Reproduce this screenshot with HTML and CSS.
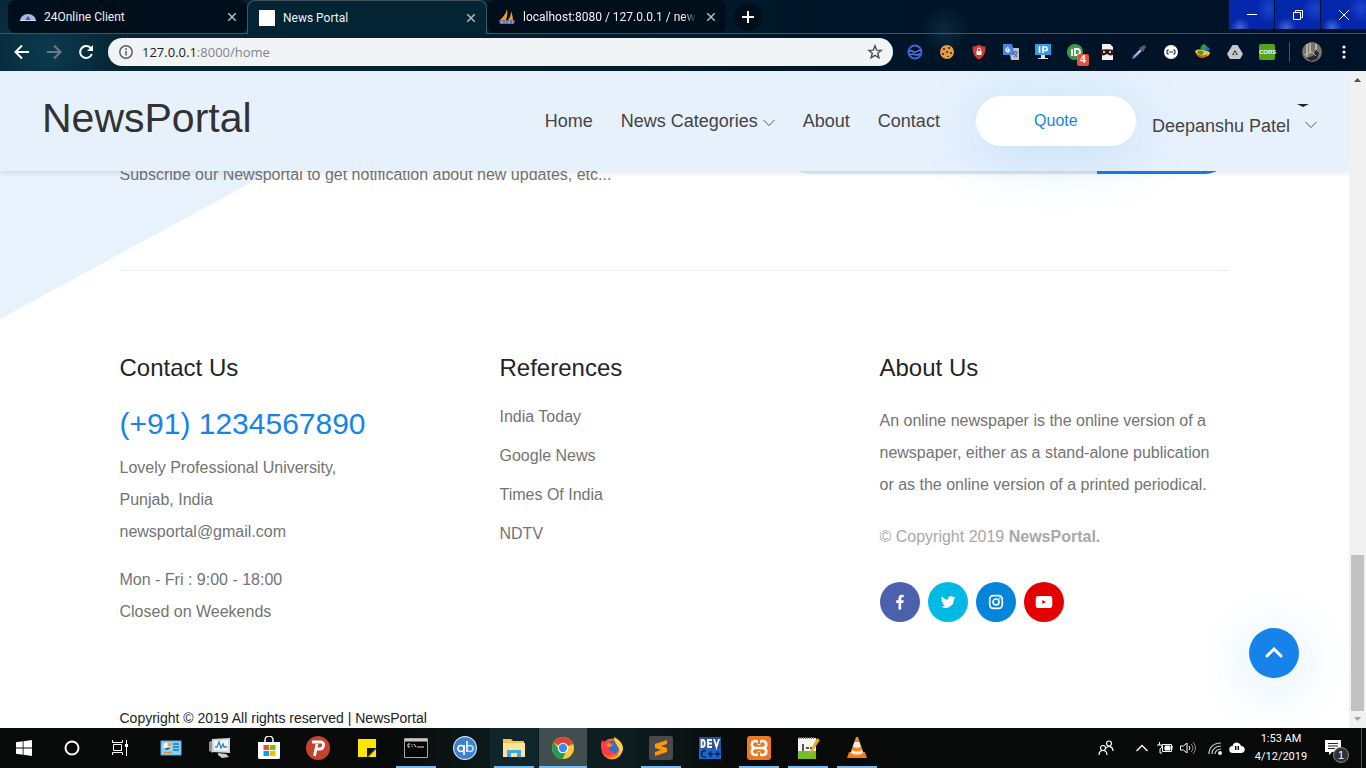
FILE: index.html
```html
<!DOCTYPE html>
<html lang="en">
<head>
<meta charset="utf-8">
<title>News Portal</title>
<link rel="stylesheet" href="styles.css">
</head>
<body>
<div class="desktop">
  <div class="tabstrip">
    <div class="tab">
      <svg class="favicon" width="16" height="16" viewBox="0 0 16 16"><path d="M0 12a8 7 0 0 1 16 0z" fill="#a9b8e8"/><path d="M5 11.500 8 7l3 4.500z" fill="#4a5488"/><path d="M0 11h16v1H0z" fill="#d6defa"/></svg>
      <span class="tab-title">24Online Client</span>
      <button class="tab-close" aria-label="Close tab"><svg width="8" height="8" viewBox="0 0 8 8"><path d="m0 0 8 8M8 0 0 8"/></svg></button>
    </div>
    <div class="tab tab-active">
      <svg class="favicon" width="16" height="16" viewBox="0 0 16 16"><path d="M0 0h16v16H0z" fill="#fff"/></svg>
      <span class="tab-title">News Portal</span>
      <button class="tab-close" aria-label="Close tab"><svg width="8" height="8" viewBox="0 0 8 8"><path d="m0 0 8 8M8 0 0 8"/></svg></button>
    </div>
    <div class="tab">
      <svg class="favicon" width="16" height="16" viewBox="0 0 16 16"><path d="M8 0c1 4 0 8-1 11H1C4 8 7 5 8 0zM12 2c1 3 2 6 2 9H9c2-3 3-5 3-9z" fill="#f39a24"/><path d="M0 11h16l-1 4H1z" fill="#6d6f9d"/><path d="M2 13h2M6 13h1M9 13h2M13 13h1" stroke="#e0e0f0"/></svg>
      <span class="tab-title tab-fade">localhost:8080 / 127.0.0.1 / newsp</span>
      <button class="tab-close" aria-label="Close tab"><svg width="8" height="8" viewBox="0 0 8 8"><path d="m0 0 8 8M8 0 0 8"/></svg></button>
    </div>
    <button class="new-tab" aria-label="New tab"><svg width="12" height="12" viewBox="0 0 12 12"><path d="M6 0v12M0 6h12" stroke="#fff" stroke-width="2"/></svg></button>
    <div class="captions">
      <button aria-label="Minimize"><svg width="10" height="10" viewBox="0 0 10 10"><path d="M0 4.500h10"/></svg></button>
      <button aria-label="Restore"><svg width="10" height="10" viewBox="0 0 10 10"><path d="M.5 2.500h7v7h-7zM2.500 2V.5h7v7H8"/></svg></button>
      <button aria-label="Close"><svg width="10" height="10" viewBox="0 0 10 10"><path d="m0 0 10 10M10 0 0 10"/></svg></button>
    </div>
  </div>

  <div class="toolbar">
    <div class="nav-buttons">
      <button aria-label="Back"><svg width="16" height="16" viewBox="0 0 16 16"><path d="M15 8H2M8 1.500 1.500 8 8 14.500" stroke="#fff" stroke-width="2" fill="none"/></svg></button>
      <button aria-label="Forward"><svg width="16" height="16" viewBox="0 0 16 16"><path d="M1 8h13M8 1.500 14.500 8 8 14.500" stroke="#6d7a86" stroke-width="2" fill="none"/></svg></button>
      <button aria-label="Reload"><svg width="16" height="16" viewBox="0 0 16 16"><path d="M13 4.500A6 6 0 1 0 13.800 10" stroke="#fff" stroke-width="2" fill="none"/><path d="M15 1v6H9z" fill="#fff"/></svg></button>
    </div>
    <div class="omnibox">
      <svg width="16" height="16" viewBox="0 0 16 16"><circle cx="8" cy="8" r="6.200" fill="none" stroke="#5f6368" stroke-width="1.500"/><path d="M8 7v4.500M8 4.300V6" stroke="#5f6368" stroke-width="1.600"/></svg>
      <span class="url"><b>127.0.0.1</b>:8000/home</span>
      <button aria-label="Bookmark this page"><svg width="16" height="16" viewBox="0 0 16 16"><path d="m8 1.800 1.700 4.300 4.500.3-3.500 2.900 1.200 4.500L8 11.300l-3.900 2.500 1.200-4.500-3.500-2.900 4.500-.3z" fill="none" stroke="#4b4f54" stroke-width="1.400"/></svg></button>
    </div>
    <div class="extensions">
      <svg viewBox="0 0 16 16"><circle cx="8" cy="8" r="6.500" fill="none" stroke="#3e66d8" stroke-width="2"/><path d="M2 8c3-4 4 2 7 0s3-2 5-1M3 11c4-3 5 2 10-1" fill="none" stroke="#547be8" stroke-width="1.500"/></svg>
      <svg viewBox="0 0 16 16"><circle cx="8" cy="8" r="7" fill="#e09b45"/><path d="M4 4h2v2H4zM9 3h2v2H9zM7 7h2v2H7zM3 9h2v2H3zM11 8h2v2h-2zM8 12h2v1H8z" fill="#6b3615"/></svg>
      <svg viewBox="0 0 16 16"><path d="M8 .5c2 1.500 4 2 6.500 2C14.500 9 13 13 8 15.500 3 13 1.500 9 1.500 2.500 4 2.500 6 2 8 .5z" fill="#d63a2f"/><path d="M5.500 7h5v4h-5z" fill="#fff"/><path d="M6.500 7V5.500a1.500 1.500 0 0 1 3 0V7" fill="none" stroke="#fff"/></svg>
      <svg viewBox="0 0 16 16"><path d="M6 4h10v12H8z" fill="#b9c4d2"/><path d="M0 0h9l3 11H0z" fill="#4a83e8"/><path d="M7 5.500H5V7h1.500A2 2 0 1 1 6 4.200" fill="none" stroke="#fff" stroke-width="1.100"/><path d="M10 8h5M12.500 7v1M11 13c2-1 3-3 3-5M11 9l3 4" stroke="#566070" fill="none"/></svg>
      <svg viewBox="0 0 16 16"><path d="M0 0h16v11H0z" fill="#2f9bea"/><path d="M6 11h4v3h3v1H3v-1h3z" fill="#dce5ea"/><path d="M4.500 2v7M8 9V3h2.500a1.500 1.500 0 0 1 0 3.500H8" stroke="#fff" stroke-width="1.700" fill="none"/></svg>
      <span class="ext-badged"><svg viewBox="0 0 16 16"><circle cx="8" cy="8" r="8" fill="#3d9b4c"/><path d="M5 5v7M8 12V5h2a3 3 0 0 1 0 6H8" stroke="#fff" stroke-width="1.800" fill="none"/></svg><span class="ext-badge">4</span></span>
      <svg viewBox="0 0 16 16"><path d="M3 0h8l3 3v13H3z" fill="#f2f2f2"/><path d="M1 6c5-1 9-1 14 0l-1 5c-3 1-4 0-6-1-2 1-3 2-6 1z" fill="#33191a"/><path d="M4 8h2M10 8h2" stroke="#fff" stroke-width="1.500"/></svg>
      <svg viewBox="0 0 16 16"><path d="m1 15 1-3 7-7 2 2-7 7z" fill="#5b7fd0"/><path d="m2 14 7-8 1 1z" fill="#eef"/><path d="m8 4 4 4 1-2 2-3-2-2-3 2z" fill="#5a5d66"/></svg>
      <svg viewBox="0 0 16 16"><circle cx="8" cy="8" r="7" fill="#fff"/><path d="M5.500 5.500 4 7v2l1.500 1.500M10.500 5.500 12 7v2l-1.500 1.500M6 8h4" fill="none" stroke="#30343b" stroke-width="1.200"/></svg>
      <svg viewBox="0 0 16 16"><path d="M5 4 9 0l6 5-5 6z" fill="#1b6fc4"/><path d="m6 2 3-2 3 3-4 4z" fill="#2e9e39"/><path d="M0 7c4-3 8-1 11 0l4 1-1 3c-5 4-12 3-14-4z" fill="#f3cf35"/><path d="M1 9c3 3 7 3 12 1-3 6-10 5-12-1z" fill="#d8511f"/><path d="M2 8c2-2 5-1 7 0l-2 3C5 11 3 10 2 8z" fill="#2e9e39"/></svg>
      <svg viewBox="0 0 16 16"><path d="M5.500 1h5L16 10l-3 5H3l-3-5z" fill="#c6c8ca"/><path d="m8 6 3 5H5z" fill="#29313b"/><path d="m8 8 1.500 2.500h-3z" fill="#fff"/></svg>
      <span class="ext-cors">CORS</span>
    </div>
    <div class="toolbar-end">
      <svg class="avatar" width="20" height="20" viewBox="0 0 20 20"><circle cx="10" cy="10" r="10" fill="#77736b"/><path d="M5 2v13M8 1v10M14 2v6" stroke="#c9c5b8" stroke-width="1.500"/><path d="m4 16 7-2 3-6 3 3-2 6-6 2z" fill="#26282c"/><path d="m2 13 8-3 4 4" stroke="#b7c0c8" fill="none"/></svg>
      <button aria-label="Menu"><svg width="4" height="14" viewBox="0 0 4 14" fill="#fff"><circle cx="2" cy="2" r="1.600"/><circle cx="2" cy="7" r="1.600"/><circle cx="2" cy="12" r="1.600"/></svg></button>
    </div>
  </div>

  <div class="viewport">
    <div class="page">
      <header class="site-header">
        <a class="brand" href="#">NewsPortal</a>
        <nav class="site-nav">
          <a href="#">Home</a>
          <a href="#">News Categories <svg width="12" height="8" viewBox="0 0 12 8"><path d="m.5 1 5.500 5.500L11.500 1"/></svg></a>
          <a href="#">About</a>
          <a href="#">Contact</a>
        </nav>
        <button class="quote">Quote</button>
        <a class="user" href="#">Deepanshu Patel <svg width="12" height="8" viewBox="0 0 12 8"><path d="m.5 1 5.500 5.500L11.500 1"/></svg><span class="user-caret"></span></a>
      </header>
      <main class="footer-area">
        <div class="wedge"></div>
        <div class="container newsletter">
          <p>Subscribe our Newsportal to get notification about new updates, etc...</p>
          <form class="subscribe"><input type="email" aria-label="Email address"><button type="button" aria-label="Subscribe"></button></form>
        </div>
        <div class="container columns">
          <section>
            <h2>Contact Us</h2>
            <a class="phone" href="#">(+91) 1234567890</a>
            <p>Lovely Professional University,<br>Punjab, India<br>newsportal@gmail.com</p>
            <p class="hours">Mon - Fri : 9:00 - 18:00<br>Closed on Weekends</p>
          </section>
          <section>
            <h2>References</h2>
            <ul class="links">
              <li><a href="#">India Today</a></li>
              <li><a href="#">Google News</a></li>
              <li><a href="#">Times Of India</a></li>
              <li><a href="#">NDTV</a></li>
            </ul>
          </section>
          <section>
            <h2>About Us</h2>
            <p>An online newspaper is the online version of a<br>newspaper, either as a stand-alone publication<br>or as the online version of a printed periodical.</p>
            <p class="copyright">© Copyright 2019 <b>NewsPortal.</b></p>
            <div class="social">
              <a class="facebook" href="#" aria-label="Facebook"><svg viewBox="0 0 16 16"><path d="M6.500 15.500V9H4.200V6.300h2.300V4.200C6.500 1.900 7.800.8 9.800.8l1.900.1v2.400h-1.300c-1 0-1.200.5-1.200 1.200v1.800h2.500L11.300 9H9.200v6.500z"/></svg></a>
              <a class="twitter" href="#" aria-label="Twitter"><svg viewBox="0 0 16 16"><path d="M15.500 3.500c-.6.300-1.100.4-1.700.5.600-.4 1.100-1 1.300-1.600-.6.300-1.200.6-1.900.7a3 3 0 0 0-5.200 2.700A8.500 8.500 0 0 1 1.800 2.600a3 3 0 0 0 1 4c-.5 0-1-.1-1.400-.4 0 1.500 1 2.700 2.400 3-.4.100-.9.100-1.300 0 .4 1.200 1.500 2.100 2.800 2.100A6 6 0 0 1 .8 12.600a8.600 8.600 0 0 0 13.200-7.600c.6-.4 1.100-.9 1.500-1.500z"/></svg></a>
              <a class="instagram" href="#" aria-label="Instagram"><svg viewBox="0 0 16 16"><rect x="1.700" y="1.700" width="12.600" height="12.600" rx="3.500" fill="none" stroke="#fff" stroke-width="1.700"/><circle cx="8" cy="8" r="3" fill="none" stroke="#fff" stroke-width="1.700"/><circle cx="11.700" cy="4.300" r=".9"/></svg></a>
              <a class="youtube" href="#" aria-label="YouTube"><svg class="wide" viewBox="0 0 18 16"><path fill-rule="evenodd" d="M3 2h12c1.500.3 2.300 1 2.300 3v6c0 2-1 3-2.300 3H3C1.500 13.700.7 13 .7 11V5C.7 3 1.600 2.200 3 2zm4.300 4v4L11 8z"/></svg></a>
            </div>
          </section>
        </div>
        <p class="container legal">Copyright © 2019 All rights reserved | NewsPortal</p>
      </main>
      <button class="to-top" aria-label="Back to top"><svg width="18" height="12" viewBox="0 0 18 12"><path d="m2 9 7-7 7 7" fill="none" stroke="#fff" stroke-width="3" stroke-linecap="round"/></svg></button>
    </div>
    <div class="scrollbar">
      <svg width="7" height="4" viewBox="0 0 7 4"><path d="M0 4 3.500 0 7 4z" fill="#505050"/></svg>
      <div class="track"><div class="thumb"></div></div>
      <svg width="7" height="4" viewBox="0 0 7 4"><path d="M0 0h7L3.500 4z" fill="#a3a3a3"/></svg>
    </div>
  </div>

  <div class="taskbar">
    <div class="system">
      <button aria-label="Start"><svg width="16" height="16" viewBox="0 0 16 16" fill="#fff"><path d="m0 2.300 6.700-1v6.300H0zM7.500 1.200 16 0v7.600H7.500zM0 8.400h6.700v6.300l-6.700-1zM7.500 8.400H16V16l-8.500-1.200z"/></svg></button>
      <button aria-label="Search"><svg width="16" height="16" viewBox="0 0 16 16"><circle cx="8" cy="8" r="6.500" fill="none" stroke="#fff" stroke-width="2"/></svg></button>
      <button aria-label="Task view"><svg width="16" height="16" viewBox="0 0 16 16" fill="none" stroke="#fff"><path d="M.5 0v2.500h10V0M1.500 4.500h8v6h-8zM.5 15v-2.500h10V15M14.500 0v16"/><path d="M13 4h3v3h-3z" fill="#fff" stroke="none"/></svg></button>
    </div>
    <div class="apps">
      <button aria-label="Control Panel"><svg viewBox="0 0 24 24"><path d="M1.500 4.500h21v15h-21z" fill="#4ab0ee"/><path d="M2.500 5.500h19v13h-19z" fill="#8fd0f8"/><circle cx="8.500" cy="10.500" r="4" fill="#fff"/><path d="M8.500 10.500v-4a4 4 0 0 1 4 4z" fill="#f5a52a"/><path d="M8.500 11.500h3.500a4 4 0 0 1-7 1z" fill="#1871c9"/><path d="M14 8h6M14 11h6M14 14h6" stroke="#1871c9" stroke-width="1.500"/><path d="M5 16.500h8" stroke="#f08519" stroke-width="1.500"/></svg></button>
      <button aria-label="Resource Monitor"><svg viewBox="0 0 24 24"><path d="m1 6 4-2v13l-4-2z" fill="#8d9399"/><path d="m4 3 18-1v15L4 16z" fill="#d4d9dc"/><path d="m6 5 14-1v11L6 14z" fill="#eef8fd"/><path d="M7 11h2l2-5 2 6 2-4 1 3h3" fill="none" stroke="#3685c0" stroke-width="1.300"/><path d="m10 17 8 1 3 3-7 1-4-3z" fill="#c9ced0"/></svg></button>
      <button aria-label="Store"><svg viewBox="0 0 24 24"><path d="M1 6h22v16l-1 1H2l-1-1z" fill="#fff"/><path d="M8 6V4a4 4 0 0 1 8 0v2" fill="none" stroke="#fff" stroke-width="1.500"/><path d="M6.500 9H12v5H6.500z" fill="#f25022"/><path d="M13 9h5.500v5H13z" fill="#7fba00"/><path d="M6.500 15H12v5H6.500z" fill="#00a4ef"/><path d="M13 15h5.500v5H13z" fill="#ffb900"/></svg></button>
      <button aria-label="Psiphon"><svg viewBox="0 0 24 24"><circle cx="12" cy="12" r="12" fill="#c4432a"/><path d="M6 6h9c4 0 3 7-1 7h-4M11 8 8.500 20" fill="none" stroke="#fff" stroke-width="2.800"/></svg></button>
      <button aria-label="Sticky Notes"><svg viewBox="0 0 24 24"><path d="M3 3h18v9l-9 9H3z" fill="#ffe600"/><path d="M12 21v-9h9z" fill="#111"/><path d="M13 21h8v-8z" fill="#ffe600"/></svg></button>
      <button class="running" aria-label="Command Prompt"><svg viewBox="0 0 24 24"><path d="M.5 2.500h23v19H.5z" fill="#050505" stroke="#a6a6a6"/><path d="M1 3h22v2.500H1z" fill="#c9c9c9"/><path d="M6 8H4v3h2M8 8v1M8 10v1M10 8l2 3M13 11h7" fill="none" stroke="#ddd"/></svg></button>
      <button aria-label="qBittorrent"><svg viewBox="0 0 24 24"><circle cx="12" cy="12" r="11.400" fill="#3e7fce" stroke="#c8def6" stroke-width="1.200"/><circle cx="8" cy="12.500" r="3" fill="none" stroke="#fff" stroke-width="1.600"/><path d="M11 9v10M14 5v11" stroke="#fff" stroke-width="1.600"/><circle cx="17" cy="12.500" r="3" fill="none" stroke="#cfe3fa" stroke-width="1.600"/></svg></button>
      <button class="running tinted" aria-label="File Explorer"><svg viewBox="0 0 24 24"><path d="M1 3h8l2 2h11v16H1z" fill="#f2c748"/><path d="M1 7h22v14H1z" fill="#ffe599"/><path d="M5 21v-7h14v7h-4v-4H9v4z" fill="#3ba9e4"/></svg></button>
      <button class="running current" aria-label="Google Chrome"><svg viewBox="0 0 24 24"><circle cx="12" cy="12" r="11" fill="#f9ca33"/><path d="M12 12 2.500 6.500a11 11 0 0 1 19 0L22 8z" fill="#df4333"/><path d="M2.500 6.500a11 11 0 0 0 9 16.500l4.500-9L8 13z" fill="#239c56"/><circle cx="12" cy="12" r="5.300" fill="#fff"/><circle cx="12" cy="12" r="4.200" fill="#4688f1"/></svg></button>
      <button aria-label="Firefox"><svg viewBox="0 0 24 24"><circle cx="12" cy="13" r="10.500" fill="#ff6a1f"/><circle cx="12" cy="11.500" r="7" fill="#2f6fd0"/><path d="M14 1c7 3 11 10 8 15-3 6-9 8-14 6 7 1 12-3 11-9-1-4-5-6-5-12z" fill="#ffd53a"/><path d="M2 4c1 1 2 2 3 2 2-2 4-2 4-1l1 2 4 1-4 3c-3 2 0 6 5 4-2 4-6 6-10 4C1 16 0 9 2 4z" fill="#ff3b47"/><path d="m6 9 3-3 1 2 3 1-3 2H8z" fill="#ff8a22"/></svg></button>
      <button class="running" aria-label="Sublime Text"><svg viewBox="0 0 24 24"><rect width="24" height="24" rx="2" fill="#4a4a4a"/><path d="m6 8 12-4v4l-6 2 6 2v4L6 20v-4l6-2-6-2z" fill="#ff9800"/></svg></button>
      <button aria-label="Dev-C++"><svg viewBox="0 0 24 24"><path d="M1 1h22v22H1z" fill="#2a4f9e"/><path d="M1 13h22v10H1z" fill="#1769cf"/><path d="M3.500 4v7h1c3 0 3-7 0-7zM14 4h-4v7h4M10 7.500h4M16 3l2.500 8L21 3" fill="none" stroke="#fff" stroke-width="1.800"/><path d="M8 15c-5-2-7 7 0 6M10 18h5M12.500 15v6M16.500 18h6M19.500 15v6" fill="none" stroke="#0b2a60" stroke-width="1.800"/></svg></button>
      <button class="running" aria-label="XAMPP"><svg viewBox="0 0 24 24"><rect width="24" height="24" rx="3" fill="#ef7622"/><path d="M12 9V7.500C12 6 10.500 5 8.500 5 3.500 5 3.500 12 8.500 12h7c5 0 5-7 0-7-2 0-3.500 1-3.500 2.500zM12 15v1.500c0 1.500-1.500 2.500-3.500 2.500-5 0-5-7 0-7h7c5 0 5 7 0 7-2 0-3.500-1-3.500-2.500z" fill="none" stroke="#fff" stroke-width="2.600"/><path d="M11 3h2v5h-2zM11 16h2v5h-2z" fill="#ef7622"/></svg></button>
      <button class="running" aria-label="Notepad++"><svg viewBox="0 0 24 24"><path d="M2 2h18v21H2z" fill="#f4f7ed"/><path d="M2 15h18v8H2z" fill="#75bd2c"/><path d="M3 2h16" stroke="#777" stroke-width="2" stroke-dasharray="1 1"/><path d="M7 8v7M10 12h3M14 12h2" stroke="#222" stroke-width="1.500"/><path d="m14 15 7-13 3 2-8 12-3 3z" fill="#efa325"/></svg></button>
      <button class="running" aria-label="VLC"><svg viewBox="0 0 24 24"><path d="m2 22 2-6h16l2 6z" fill="#f07b12"/><path d="M11 1h2l6 17c-4 3-10 3-14 0z" fill="#f58a1c"/><path d="m9.500 6-1.700 5c3 1 5 1 8 0l-1.600-5zM7 14l-1 3c4 2 8 2 12 0l-1-3c-3 2-7 2-10 0z" fill="#eee"/></svg></button>
    </div>
    <div class="tray">
      <svg width="16" height="16" viewBox="0 0 16 16" fill="none" stroke="#fff" stroke-width="1.200"><circle cx="11" cy="3.500" r="2.500"/><circle cx="5" cy="8" r="2.500"/><path d="M1 15c0-6 8-6 8 0M8 8c3-3 7-1 7 3"/></svg>
      <svg class="tray-up" width="12" height="8" viewBox="0 0 12 8" fill="none" stroke="#fff" stroke-width="1.300"><path d="m.5 7 5.500-5.500L11.500 7"/></svg>
      <svg width="16" height="12" viewBox="0 0 16 12" fill="none" stroke="#fff"><path d="M5.500 2.500h9v7h-9zM15 4.500h1v3M2.500 0v3M0 3h5v2L3 7v4h2"/><path d="M8 4h5v4H8z" fill="#fff"/></svg>
      <svg width="16" height="14" viewBox="0 0 16 14" fill="none" stroke="#fff"><path d="M.5 5h3L7 2v10L3.500 9h-3z"/><path d="M9 5q2 2 0 4"/><path d="M11 3q4 4 0 8M13 1q5 6 0 12" stroke="#888"/></svg>
      <svg class="tray-wifi" width="14" height="14" viewBox="0 0 14 14" fill="none" stroke="#ccc" stroke-width="1.200"><path d="M1 13C1 6 6 2 13 2M4 13c0-5 4-8 9-8M7 13c0-3 3-5 6-5"/><circle cx="12" cy="12" r="1.500" fill="#fff"/></svg>
      <svg width="16" height="12" viewBox="0 0 16 12"><path d="M4 11a3.500 3.500 0 0 1-.5-7C5-1 11 0 12 4c5 0 5 7 0 7z" fill="#fff"/><path d="M6.700 4v4M9.300 4v4" stroke="#111" stroke-width="1.500"/></svg>
      <div class="clock"><span>1:53 AM</span><span>4/12/2019</span></div>
      <button class="notices" aria-label="Notifications"><svg width="16" height="16" viewBox="0 0 16 16"><path d="M0 0h16v12H7l-3 3v-3H0z" fill="#fff"/><path d="M3 3.500h10M3 6h10M3 8.500h7" stroke="#222"/></svg><span class="notice-count">1</span></button>
    </div>
  </div>
</div>
</body>
</html>
```
FILE: styles.css
```css
* { box-sizing: border-box; }

body {
  margin: 0;
  font-family: "Liberation Sans", sans-serif;
}

button {
  padding: 0;
  border: 0;
  background: none;
  font: inherit;
}

a { color: inherit; text-decoration: none; }

.desktop {
  display: grid;
  grid-template-rows: 34px 37px 1fr 40px;
  height: 100vh;
  overflow: hidden;
  background:
    radial-gradient(circle at 48px 52px, #0b3a4e, transparent 70px),
    radial-gradient(circle at 945px 30px, #0a2a3d, transparent 24px),
    linear-gradient(90deg, #062738, #02202f 35%, #001527 62%, #001227);
}

/* Browser tabs */
.tabstrip {
  display: flex;
  align-items: flex-start;
  height: 34px;
  padding-left: 8px;
  border-bottom: 1px solid #46535f;
  font-family: Roboto, sans-serif;
  font-size: 12px;
  color: #eef1f4;
}

.tab {
  display: flex;
  align-items: center;
  gap: 8px;
  width: 239px;
  height: 33px;
  padding: 0 7px 0 12px;
  border-radius: 8px;
  background: #000d1b;
}

.tab-active {
  width: 240px;
  height: 34px;
  padding: 0 7px 0 11px;
  border: 1px solid #46535f;
  border-bottom: 0;
  border-radius: 8px 8px 0 0;
  background: #032433;
}

.favicon { flex: none; }
.tab-title { flex: 1; min-width: 0; white-space: nowrap; }
.tab-fade { mask-image: linear-gradient(90deg, #000 160px, transparent 174px); }
.tab-close { display: flex; padding: 4px; }
.tab-close svg { stroke: #b3bcc4; stroke-width: 1.500; }

.new-tab {
  display: grid;
  place-items: center;
  width: 28px;
  height: 28px;
  margin: 3px 0 0 8px;
  border-radius: 50%;
  background: #000d1b;
}

.captions { display: flex; gap: 1px; margin-left: auto; }

.captions button {
  display: grid;
  place-items: center;
  width: 45px;
  height: 29px;
  background: radial-gradient(circle at 25% 95%, #3d68d8, transparent 10px), radial-gradient(circle at 90% 30%, #1c43d0, transparent 14px), #0426ab;
}

.captions svg { fill: none; stroke: #fff; }

/* Address bar */
.toolbar {
  display: flex;
  align-items: center;
  padding: 0 20px 2px 14px;
}

.nav-buttons { display: flex; gap: 16px; margin-right: 14px; }
.nav-buttons button, .toolbar-end button, .omnibox button { display: flex; }

.omnibox {
  display: flex;
  flex: 1;
  align-items: center;
  gap: 8px;
  height: 28px;
  padding: 0 10px;
  border-radius: 14px;
  background: #f1f3f4;
}

.url {
  flex: 1;
  font-family: "Open Sans", sans-serif;
  font-size: 13px;
  color: #80868b;
}

.url b { font-weight: 400; color: #202124; }

.extensions { display: flex; gap: 16px; margin-left: 14px; }
.extensions svg { display: block; width: 16px; height: 16px; }
.ext-badged { position: relative; }

.ext-badge {
  position: absolute;
  top: 10px;
  left: 10px;
  width: 12px;
  border-radius: 2px;
  background: #e8503f;
  color: #fff;
  font: bold 10px/12px "Liberation Sans", sans-serif;
  text-align: center;
}

.ext-cors {
  width: 16px;
  border-radius: 2px;
  background: #54a51c;
  color: #fff;
  font: bold 6px/16px "Liberation Sans", sans-serif;
  text-align: center;
}

.toolbar-end {
  display: flex;
  align-items: center;
  gap: 20px;
  margin-left: 14px;
  padding-left: 12px;
  border-left: 1px solid #46535f;
}

/* Web page */
.viewport {
  display: flex;
  min-height: 0;
  overflow: hidden;
  background: #fff;
}

.page {
  position: relative;
  flex: 1;
  overflow: hidden;
  color: #737373;
  font-size: 16px;
  line-height: 32px;
}

.site-header {
  position: relative;
  z-index: 2;
  display: flex;
  align-items: center;
  height: 100px;
  padding: 0 32px 0 42px;
  background: #e7f1fc;
  box-shadow: 0 2px 6px rgba(0, 0, 0, 0.1);
  color: #444;
  font-size: 18px;
}

.brand { padding-bottom: 6px; color: #323232; font-size: 41px; }
.site-nav { display: flex; gap: 28px; margin: 0 36px 0 auto; }
.site-header svg { fill: none; stroke: #555; stroke-width: 1; }

.quote {
  width: 160px;
  height: 50px;
  margin-right: 16px;
  border-radius: 25px;
  background: #fff;
  box-shadow: 0 10px 60px rgba(23, 143, 237, 0.18);
  color: #1683ea;
  font-size: 16px;
}

.user { position: relative; padding-top: 10px; }
.user svg { margin: 0 0 3px 10px; }

.user-caret {
  position: absolute;
  top: 4px;
  right: 8px;
  border: solid transparent;
  border-width: 3px 6px 0;
  border-top-color: #222;
}

.footer-area {
  position: relative;
  margin-top: -47px;
}

.wedge {
  position: absolute;
  top: 0;
  left: 0;
  width: 359px;
  height: 195px;
  background: #e7f2fd;
  clip-path: polygon(0 0, 100% 0, 0 100%);
}

.container {
  position: relative;
  width: calc(100% - 80px);
  max-width: 1110px;
  margin: 0 auto;
}

p { margin: 0; }

.newsletter {
  display: flex;
  justify-content: space-between;
  height: 147px;
  border-bottom: 1px solid #e5f1fc;
}

.newsletter p { padding-top: 35px; }

.subscribe {
  display: flex;
  width: 445px;
  height: 50px;
  overflow: hidden;
  border-radius: 25px;
}

.subscribe input { flex: 1; min-width: 0; border: 0; background: #e1ecf8; }
.subscribe button { width: 133px; background: #1683ea; }

.columns {
  display: grid;
  grid-template-columns: repeat(3, 1fr);
  gap: 30px;
  padding-top: 82px;
}

h2 {
  margin: 0 0 22px;
  color: #252525;
  font-size: 24px;
  font-weight: 400;
  line-height: 30px;
}

.phone {
  display: block;
  margin-bottom: 9px;
  color: #1683ea;
  font-size: 30px;
  line-height: 38px;
}

.hours { margin-top: 16px; }

.links {
  display: grid;
  gap: 15px;
  margin: 0;
  padding: 0;
  line-height: 24px;
  list-style: none;
}

.copyright { margin: 20px 0 29px; color: #a8a8a8; }

.social { display: flex; gap: 8px; }

.social a {
  display: grid;
  place-items: center;
  width: 40px;
  height: 40px;
  border-radius: 50%;
}

.social svg { width: 16px; height: 16px; fill: #fff; }
.social .wide { width: 18px; }
.facebook { background: #4c61ad; }
.twitter { background: #00b9e5; }
.instagram { background: #0285da; }
.youtube { background: #e30000; }

.legal {
  padding-top: 78px;
  color: #222;
  font-size: 14px;
  line-height: 24px;
}

.to-top {
  position: absolute;
  right: 50px;
  bottom: 50px;
  display: grid;
  place-items: center;
  width: 50px;
  height: 50px;
  border-radius: 50%;
  background: #1683ea;
  box-shadow: 0 8px 56px rgba(22, 131, 234, 0.2);
}

.scrollbar {
  display: flex;
  flex-direction: column;
  align-items: center;
  width: 17px;
  padding: 7px 2px;
  background: #f1f1f1;
}

.track {
  display: flex;
  flex: 1;
  flex-direction: column;
  justify-content: flex-end;
  width: 13px;
  padding: 6px 0;
}

.thumb { height: 25%; background: #c1c1c1; }

/* Windows taskbar */
.taskbar {
  display: flex;
  background: linear-gradient(90deg, #080909 28%, #0d1e21 38%, #0e1d20 46%, #080909 54%);
}

.system, .apps, .tray { display: flex; }
.system button, .apps button { display: grid; place-items: center; width: 48px; }

.apps { gap: 1px; margin-left: 3px; }
.apps svg { width: 24px; height: 24px; }
.apps .running { background: linear-gradient(#76b9ed, #76b9ed) center bottom / 40px 2px no-repeat; }
.apps .tinted { background-color: #10262a; }
.apps .current { background-color: #414e50; background-size: 48px 2px; }

.tray {
  align-items: center;
  gap: 7px;
  margin-left: auto;
  padding-right: 4px;
  color: #fff;
}

.tray-up { margin: 0 2px 0 15px; }
.tray-wifi { margin-left: 5px; }

.clock {
  display: flex;
  flex-direction: column;
  width: 58px;
  font-family: Roboto, sans-serif;
  font-size: 11px;
  line-height: 18px;
  text-align: center;
}

.notices {
  position: relative;
  align-self: stretch;
  display: flex;
  align-items: center;
  padding: 0 20px 0 8px;
  border-right: 1px solid #555;
}

.notice-count {
  position: absolute;
  top: 19px;
  left: 16px;
  width: 16px;
  border: 1px solid #888;
  border-radius: 50%;
  background: #333;
  color: #fff;
  font-size: 11px;
  line-height: 14px;
  text-align: center;
}
```
